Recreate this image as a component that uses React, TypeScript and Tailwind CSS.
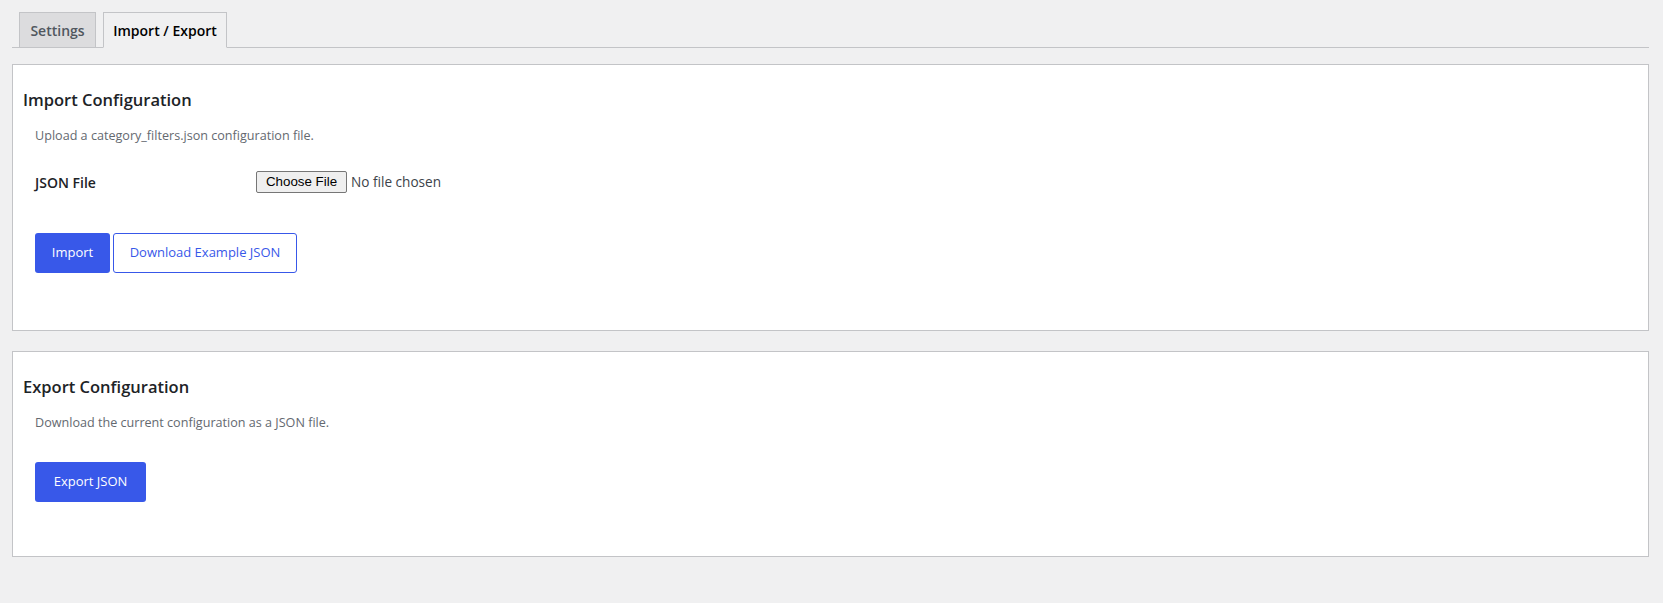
import React from "react";

const font = { fontFamily: '"Open Sans", "Noto Sans", sans-serif' };

export default function App() {
  return (
    <div
      className="min-h-[603px] w-full bg-[#f0f0f1] pl-[12px] pr-[14px] pt-[12px] font-['Open_Sans',sans-serif] text-[#1d2327]"
      style={font}
    >
      {/* Tabs */}
      <div className="flex items-end gap-[7px] border-b border-[#c3c4c7] pl-[7px]">
        <div className="-mb-px flex h-[36px] w-[77px] items-center justify-center border border-[#c3c4c7] bg-[#dcdcde] text-[14px] font-semibold text-[#50575e]">
          Settings
        </div>
        <div className="-mb-px flex h-[36px] w-[124px] items-center justify-center border border-[#c3c4c7] border-b-[#f0f0f1] bg-[#f0f0f1] text-[14px] font-semibold text-[#000]">
          Import / Export
        </div>
      </div>

      {/* Import panel */}
      <div className="mt-[16px] border border-[#c3c4c7] bg-white px-[10px] pb-[57px] pt-[23px]">
        <h2 className="text-[16.5px] font-semibold leading-[24px] text-[#1d2327]">Import Configuration</h2>
        <div className="ml-[12px]">
          <p className="mt-[14px] text-[12.6px] leading-[20px] text-[#646970]">
            Upload a category_filters.json configuration file.
          </p>
          <div className="mt-[25px] flex h-[22px] items-center">
            <div className="w-[221px] text-[14px] font-semibold text-[#1d2327]">JSON File</div>
            <div className="flex items-center">
              <span
                className="flex h-[22px] w-[91px] items-center justify-center rounded-[2px] border border-[#767676] bg-[#efefef] text-[13.33px] text-black"
                style={{ fontFamily: '"Liberation Sans", Arial, sans-serif' }}
              >
                Choose File
              </span>
              <span className="ml-[4px] text-[13.6px] text-[#3c434a]">No file chosen</span>
            </div>
          </div>
          <div className="mt-[40px] flex gap-[3px]">
            <button className="flex h-[40px] w-[75px] items-center justify-center rounded-[3px] bg-[#3858e9] text-[13px] font-medium text-white">
              Import
            </button>
            <button className="flex h-[40px] w-[184px] items-center justify-center rounded-[3px] border border-[#3858e9] bg-white text-[13px] font-medium text-[#3858e9]">
              Download Example JSON
            </button>
          </div>
        </div>
      </div>

      {/* Export panel */}
      <div className="mt-[20px] border border-[#c3c4c7] bg-white px-[10px] pb-[54px] pt-[23px]">
        <h2 className="text-[16.5px] font-semibold leading-[24px] text-[#1d2327]">Export Configuration</h2>
        <div className="ml-[12px]">
          <p className="mt-[14px] text-[12.6px] leading-[20px] text-[#646970]">
            Download the current configuration as a JSON file.
          </p>
          <div className="mt-[29px] flex">
            <button className="flex h-[40px] w-[111px] items-center justify-center rounded-[3px] bg-[#3858e9] text-[13px] font-medium text-white">
              Export JSON
            </button>
          </div>
        </div>
      </div>
    </div>
  );
}
